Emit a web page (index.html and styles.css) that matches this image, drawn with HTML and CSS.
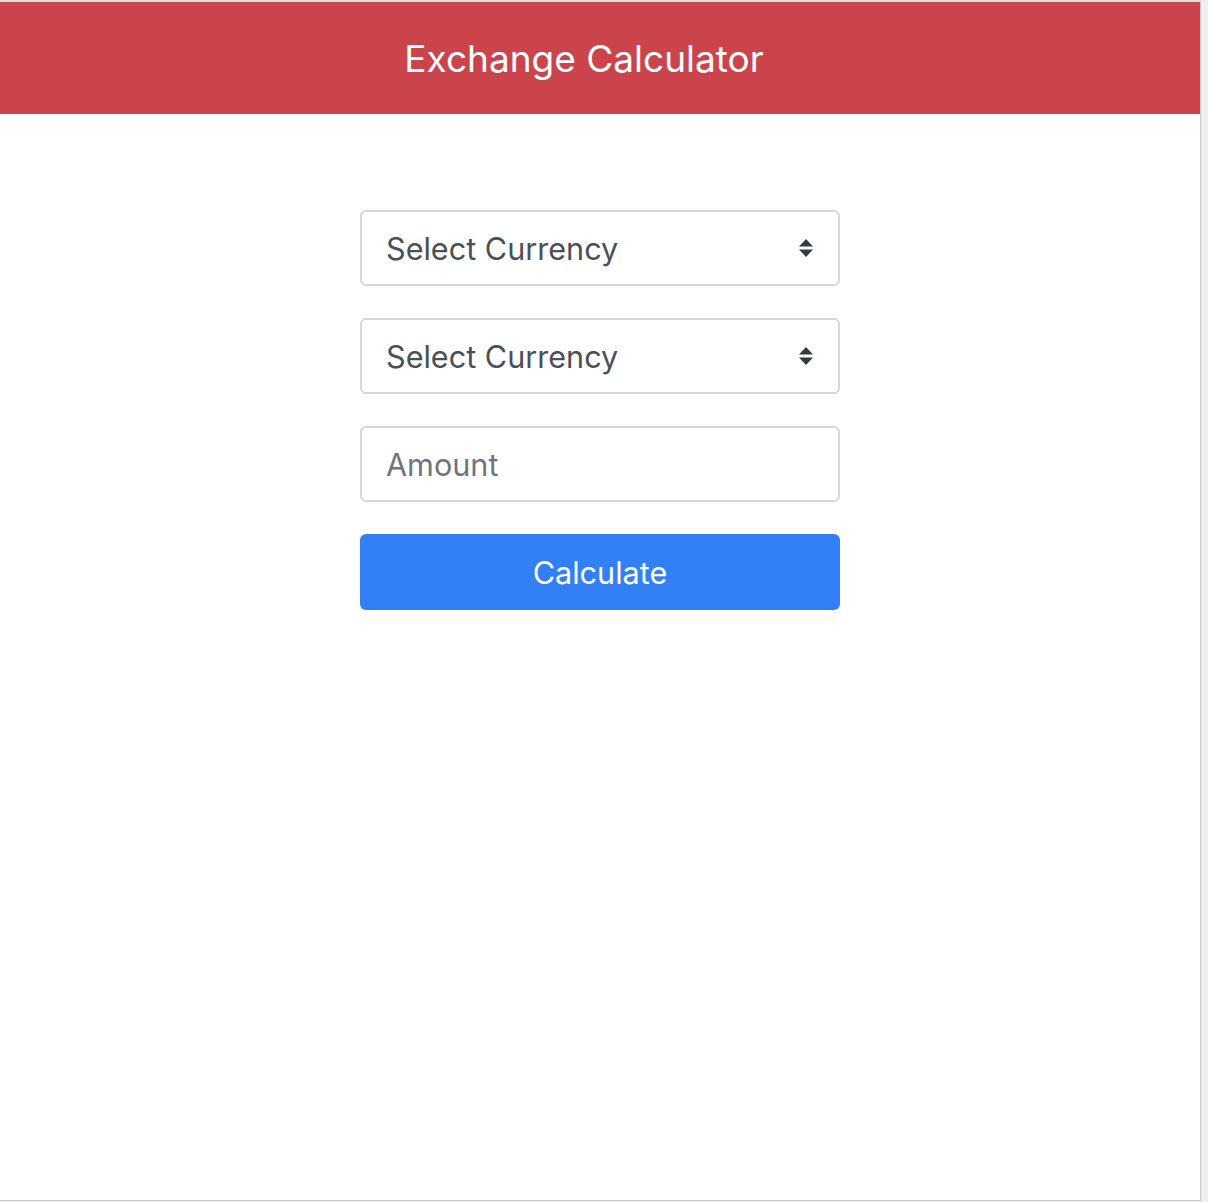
FILE: index.html
```html
<!DOCTYPE html>
<html>
<head>
<meta charset="utf-8">
<link rel="stylesheet" href="styles.css">
</head>
<body>
<div class="frame">
  <header class="top">
    <h1 class="title">Exchange Calculator</h1>
  </header>
  <main class="content">
    <form class="calc">
      <div class="select-wrap">
        <select class="field select"><option>Select Currency</option></select>
        <svg class="arrows" width="16" height="20" viewBox="0 0 16 20"><path d="M8 1 L15 8.5 H1 Z M1 11.5 H15 L8 19 Z" fill="#343a40"/></svg>
      </div>
      <div class="select-wrap">
        <select class="field select"><option>Select Currency</option></select>
        <svg class="arrows" width="16" height="20" viewBox="0 0 16 20"><path d="M8 1 L15 8.5 H1 Z M1 11.5 H15 L8 19 Z" fill="#343a40"/></svg>
      </div>
      <input class="field" type="text" placeholder="Amount">
      <button class="btn" type="button">Calculate</button>
    </form>
  </main>
</div>
</body>
</html>
```
FILE: styles.css
```css
html, body {
  margin: 0;
  padding: 0;
  background: #efefef;
}
body {
  font-family: Inter, "Noto Sans", sans-serif;
}
.frame {
  width: 1201px;
  height: 1201px;
  box-sizing: border-box;
  background: #fff;
  border-top: 2px solid #dcdcdc;
  border-right: 1px solid #c8c8c8;
  border-bottom: 1px solid #c8c8c8;
}
.top {
  background: #cc444b;
  height: 112px;
  display: flex;
  align-items: center;
  justify-content: center;
  padding-right: 32px;
}
.title {
  margin: 0;
  color: #fff;
  font-weight: 400;
  font-size: 37px;
  letter-spacing: 0;
}
.content {
  display: flex;
  justify-content: center;
  padding-top: 96px;
}
.calc {
  width: 480px;
  display: flex;
  flex-direction: column;
  gap: 32px;
}
.select-wrap {
  position: relative;
}
.field {
  display: block;
  width: 100%;
  height: 76px;
  box-sizing: border-box;
  border: 2px solid #d3d6da;
  border-radius: 6px;
  background: #fff;
  padding: 0 24px;
  font-family: Inter, "Noto Sans", sans-serif;
  font-size: 30.6px;
  color: #495057;
  outline: none;
  margin: 0;
}
.select {
  -webkit-appearance: none;
  appearance: none;
}
.field::placeholder {
  color: #6c757d;
}
.arrows {
  position: absolute;
  right: 26px;
  top: 28px;
}
.btn {
  height: 76px;
  border: none;
  border-radius: 6px;
  background: #337ff5;
  color: #fff;
  font-family: Inter, "Noto Sans", sans-serif;
  font-size: 30.6px;
  cursor: pointer;
}
```
